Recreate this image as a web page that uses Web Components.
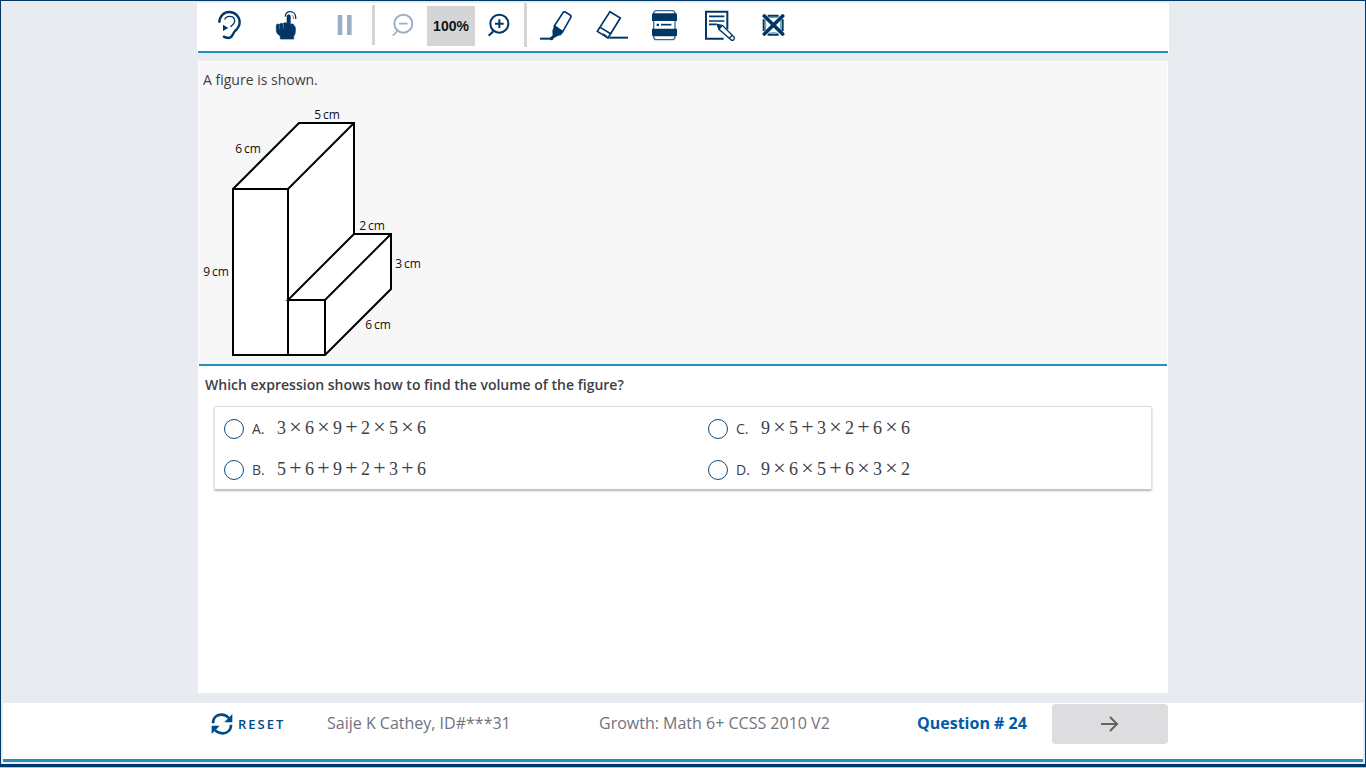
<!DOCTYPE html>
<html lang="en">
<head>
<meta charset="utf-8">
<title>Growth: Math 6+ CCSS 2010 V2</title>
<style>
html, body { margin: 0; }
body {
  --navy: #003766;
  --teal: #238fbb;
  --page: #e8ebf0;
  --ink: #3e3e46;
  background: #b4c3d3;
  font: 14px/20px "Open Sans", "Noto Sans", sans-serif;
  color: var(--ink);
}
</style>
</head>
<body>
<test-shell>
  <tool-bar slot="tools"></tool-bar>
  <question-panel>
    <span slot="stimulus">A figure is shown.</span>
    <solid-figure slot="figure"></solid-figure>
    <span slot="prompt">Which expression shows how to find the volume of the figure?</span>
    <answer-list slot="answers"></answer-list>
  </question-panel>
  <status-bar slot="status">
    <span slot="student">Saije K Cathey, ID#***31</span>
    <span slot="test">Growth: Math 6+ CCSS 2010 V2</span>
    <span slot="number">Question # 24</span>
  </status-bar>
</test-shell>

<script>
function define(name, html, setup) {
  const template = document.createElement('template');
  template.innerHTML = html;
  customElements.define(name, class extends HTMLElement {
    constructor() {
      super();
      const root = this.attachShadow({ mode: 'open' });
      root.append(template.content.cloneNode(true));
      if (setup) setup(root, this);
    }
  });
}

define('test-shell', `
<style>
:host { display: flex; flex-direction: column; box-sizing: border-box; min-height: calc(100vh - 1px);
  padding: 2px; border: 1px solid var(--navy); border-bottom-width: 3px; background: var(--page); }
main { flex: 1; display: flex; flex-direction: column; width: 100%; max-width: 970px; margin: 8px auto 10px; }
::slotted(question-panel) { flex: 1; }
</style>
<slot name="tools"></slot>
<main><slot></slot></main>
<slot name="status"></slot>`);

const icons = {
  ear: `<path d="M22 47C22 27 36 15 52 15s31 13 31 31c0 14-7 20-14 26-7 7-7 21-19 21-6 0-11-1-17-5" stroke-width="7"/><path d="M38 38c2-7 8-10 15-10 9 0 15 6 15 14 0 10-8 10-12 18" stroke-width="4"/><path d="M33 53l16 10-16 9z" fill="currentColor" stroke="none"/>`,
  hand: `<path d="M54 28q0-5 5-5t5 5v25q2-3 6-2 5 0 5 6 4 0 4 5v12q0 8-5 14v8H34v-9q-12-7-12-16V56q0-5 5-5t5 4q0-6 5-6t5 4q0-6 6-6t6 4z" fill="currentColor" stroke="currentColor" stroke-width="2"/><path d="M32 54v13M43 51v14" stroke="#fff" stroke-width="1"/><path d="M49 29c-1-10 6-15 14-15 10 0 17 7 17 16v6" stroke-width="4"/><path d="M69 23c4 3 5 7 4 13" stroke-width="2"/>`,
  pause: `<path d="M35 24h14v60H35zM63 24h14v60H63z" fill="currentColor" stroke="none"/>`,
  minus: `<circle cx="55" cy="50" r="27" stroke-width="6"/><path d="M35 69v6L23 86M42 50h26" stroke-width="5"/>`,
  plus: `<circle cx="55" cy="50" r="27" stroke-width="6"/><path d="M35 69v6L23 86M42 50h26M55 37v26" stroke-width="6"/>`,
  marker: `<path d="M46 57L72 17q2-4 7-2l13 8q6 3 3 9L70 76z" stroke-width="5"/><path d="M46 54l26 17-5 13-11 3-12 7q-1 6-6 6-5 0-6-5 0-4 4-5l5-5-1-13z" fill="currentColor" stroke="none"/><path d="M3 95h32" stroke-width="6"/>`,
  eraser: `<path d="M51 14l31 19-37 60-32-20zM22 61l32 20" stroke-width="5"/><path d="M49 92h56" stroke-width="6"/><path d="M30 80l13 8" stroke-width="3"/>`,
  reader: `<rect x="20" y="11" width="64" height="87" rx="9" stroke-width="4" opacity=".75"/><path d="M15 23q0-4 4-4h67q4 0 4 4v19H15zM15 65h75v19q0 4-4 4H19q-4 0-4-4zM29 50h7v7h-7z" fill="currentColor" stroke="none"/><path d="M42 53h31" stroke-width="5"/>`,
  notes: `<path d="M79 67V14H15v81h53" stroke-width="6"/><path d="M24 28h46M24 42h46M24 52h22" stroke-width="5"/><path d="M49 53l15 2 35 35q3 4-1 8t-8 0L54 67z" fill="#fff" stroke-width="4"/><path d="M49 53l12 5-6 8zM85 93l9-8" fill="currentColor" stroke-width="4"/>`,
  eliminate: `<path d="M38 26h33M38 83h33M26 37v35M83 37v35" stroke-width="6"/><path d="M40 30q15 4 29 0M40 79q15-4 29 0M31 40q3 14 0 29M78 40q-3 14 0 29" stroke-width="3" opacity=".6"/><path d="M28 27l55 54M83 27L28 81" stroke-width="11" stroke-linecap="round"/>`
};

define('tool-button', `
<style>
:host { display: block; }
button { display: grid; place-items: center; width: 100%; height: 44px; padding: 0; border: 0; background: none; color: var(--navy); }
button:disabled { color: #9bb0c6; }
svg { display: block; width: 36px; height: 36px; fill: none; stroke: currentColor; }
</style>
<button type="button"><svg viewBox="0 0 108 108" aria-hidden="true"></svg></button>`, (root, host) => {
  const button = root.querySelector('button');
  button.setAttribute('aria-label', host.getAttribute('label'));
  button.disabled = host.hasAttribute('disabled');
  root.querySelector('svg').innerHTML = icons[host.getAttribute('icon')];
});

define('tool-bar', `
<style>
:host { display: block; width: 100%; max-width: 972px; margin: 0 auto; background: #fff; }
div { display: flex; height: 48px; align-items: center; box-sizing: border-box; padding: 0 4px 4px; }
hr { width: 3px; height: 40px; margin: 0; border: 0; background: #d4d5d7; }
hr.tall { height: 44px; }
.audio { width: 57px; }
.zoom { width: 48px; }
.mark { width: 54px; }
.out { margin-left: 4px; }
.in { margin-right: 1px; }
.first { margin-left: 3px; }
output { box-sizing: border-box; width: 48px; height: 40px; margin-top: 2px; background: #d4d5d7; color: #111; text-align: center; font: bold 14px/40px "Liberation Sans", Arial, sans-serif; }
footer { height: 2px; margin: 0 1px; background: var(--teal); }
</style>
<div role="toolbar" aria-label="Tools">
  <tool-button class="audio" icon="ear" label="Listen"></tool-button>
  <tool-button class="audio" icon="hand" label="Touch to hear"></tool-button>
  <tool-button class="audio" icon="pause" label="Pause" disabled></tool-button>
  <hr>
  <tool-button class="zoom out" icon="minus" label="Zoom out" disabled></tool-button>
  <output>100%</output>
  <tool-button class="zoom in" icon="plus" label="Zoom in"></tool-button>
  <hr class="tall">
  <tool-button class="mark first" icon="marker" label="Highlighter"></tool-button>
  <tool-button class="mark" icon="eraser" label="Eraser"></tool-button>
  <tool-button class="mark" icon="reader" label="Line reader"></tool-button>
  <tool-button class="mark" icon="notes" label="Notes"></tool-button>
  <tool-button class="mark" icon="eliminate" label="Answer eliminator"></tool-button>
</div>
<footer></footer>`);

define('question-panel', `
<style>
:host { display: block; background: #fff; }
section { margin: 0 1px; padding: 8px 4px 4px; border-top: 1px solid #fff; border-bottom: 2px solid var(--teal); background: #f7f7f7; }
p { margin: 0; }
.prompt { padding: 9px 7px 11px; font-weight: 600; }
.answers { padding: 0 16px; }
</style>
<section><p><slot name="stimulus"></slot></p><slot name="figure"></slot></section>
<p class="prompt"><slot name="prompt"></slot></p>
<div class="answers"><slot name="answers"></slot></div>`);

define('solid-figure', `
<style>
:host { display: block; padding-top: 10px; }
svg { display: block; width: 225px; height: 260px; }
text { font: 12px "Open Sans", "Noto Sans", sans-serif; fill: #111; text-anchor: middle; }
</style>
<svg viewBox="0 0 225 260" role="img" aria-label="Solid made of two joined rectangular prisms">
  <g fill="#fff" stroke="#000" stroke-width="2" stroke-linejoin="miter">
    <path d="M30 89L96 23h55v111h37v55l-66 66H30z"/>
    <path d="M30 89h55l66-66M85 89v166M151 134l-66 66h37l66-66M122 200v55" fill="none"/>
  </g>
  <text x="124" y="19">5&thinsp;cm</text>
  <text x="45" y="53">6&thinsp;cm</text>
  <text x="169" y="130">2&thinsp;cm</text>
  <text x="205" y="168">3&thinsp;cm</text>
  <text x="13" y="176">9&thinsp;cm</text>
  <text x="175" y="229">6&thinsp;cm</text>
</svg>`);

const answers = [
  ['A', '3 × 6 × 9 + 2 × 5 × 6'],
  ['C', '9 × 5 + 3 × 2 + 6 × 6'],
  ['B', '5 + 6 + 9 + 2 + 3 + 6'],
  ['D', '9 × 6 × 5 + 6 × 3 × 2']
];

define('answer-list', `
<style>
:host { display: block; }
fieldset { display: grid; grid-template-columns: 1fr 1fr; column-gap: 50px; min-width: 0; margin: 0; padding: 0 9px;
  border: 1px solid #e0e0e0; border-bottom-color: #c4c4c4; border-radius: 2px; box-shadow: 0 1px 2px rgba(0,0,0,.3); }
label { display: flex; align-items: center; height: 41px; }
input { appearance: none; box-sizing: border-box; width: 20px; height: 20px; margin: 3px 8px 0 0; border: 1px solid #0b4a7d; border-radius: 50%; background: #fff; }
input:checked { border-width: 6px; }
.row { display: flex; align-items: baseline; }
.letter { width: 25px; }
.math { display: flex; align-items: baseline; font: 18px/20px "Liberation Serif", serif; }
.op { width: 19px; font-size: 22px; line-height: 20px; text-align: center; }
</style>
<fieldset aria-label="Answer choices"></fieldset>`, root => {
  root.querySelector('fieldset').innerHTML = answers.map(([letter, math]) => `
    <label><input type="radio" name="answer" value="${letter}"><span class="row"><span class="letter">${letter}.</span><span class="math">${math.replace(/[×+]/g, '<span class="op">$&</span>')}</span></span></label>`).join('');
});

define('status-bar', `
<style>
:host { display: block; background: #fff; border-bottom: 3px solid var(--teal); }
div { display: grid; grid-template-columns: 129fr 272fr 318fr 135fr 116fr; max-width: 970px; height: 56px; margin: 0 auto; padding-top: 1px; box-sizing: border-box; line-height: 38px; font-size: 16px; color: #70737d; }
button { height: 40px; border: 0; font: inherit; }
.reset { display: flex; align-items: center; gap: 5px; padding: 0 0 0 13px; background: none; color: #004b87; font-size: 13px; font-weight: 600; letter-spacing: 2px; }
.reset svg { width: 22px; height: 22px; fill: none; stroke: currentColor; }
.number { color: #005ca6; font-weight: 700; }
.next { display: grid; place-items: center; padding: 0; border-radius: 4px; background: #dddddf; color: #626264; }
.next svg { width: 20px; height: 20px; fill: none; stroke: currentColor; }
</style>
<div>
  <button class="reset" type="button"><svg viewBox="0 0 66 66" aria-hidden="true"><path d="M6 31C6 13 18 5 32 5c9 0 16 4 21 10M60 35c0 17-12 26-26 26-9 0-17-4-22-10" stroke-width="8"/><path d="M64 3v25H40zM2 63V38h24z" fill="currentColor" stroke="none"/></svg><span>RESET</span></button>
  <slot name="student"></slot>
  <slot name="test"></slot>
  <span class="number"><slot name="number"></slot></span>
  <button class="next" type="button" aria-label="Next question"><svg viewBox="0 0 20 20" aria-hidden="true"><path d="M1 10h17M10 3l7 7-7 7" stroke-width="2"/></svg></button>
</div>`);
</script>
</body>
</html>
